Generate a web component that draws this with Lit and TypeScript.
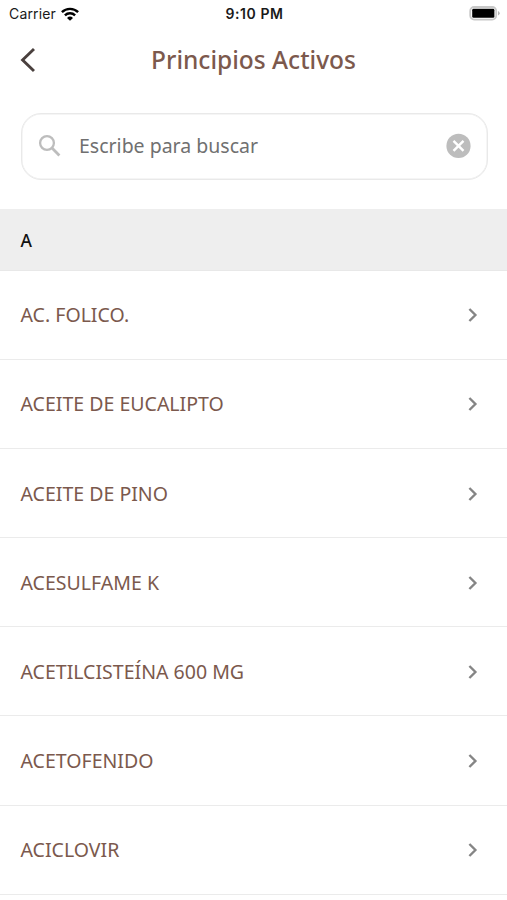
import { LitElement, html, css } from "lit";
import { customElement, property } from "lit/decorators.js";

@customElement("status-bar")
class StatusBar extends LitElement {
  static styles = css`
    :host {
      display: grid;
      grid-template-columns: 1fr auto 1fr;
      align-items: center;
      height: 27px;
      padding: 0 7px 0 9px;
      box-sizing: border-box;
      font-family: Inter, "Liberation Sans", sans-serif;
      font-size: 14px;
      color: #1a1a1a;
    }
    .carrier {
      display: flex;
      align-items: center;
      gap: 5px;
      letter-spacing: 0.15px;
    }
    .time {
      font-weight: 600;
      font-size: 14px;
      letter-spacing: 0.6px;
    }
    .battery {
      justify-self: end;
    }
    svg {
      display: block;
    }
  `;

  render() {
    return html`
      <div class="carrier">
        <span>Carrier</span>
        <svg width="18" height="14" viewBox="0 0 18 14" fill="none" stroke="#000" stroke-width="2.4">
          <path d="M.9 5.2a11.5 11.5 0 0 1 16.2 0" />
          <path d="M3.9 8.4a7.2 7.2 0 0 1 10.2 0" />
          <path d="M9 13.8 6 10.9a4.3 4.3 0 0 1 6 0z" fill="#000" stroke="none" />
        </svg>
      </div>
      <div class="time">9:10 PM</div>
      <svg class="battery" width="31" height="16" viewBox="0 0 31 16">
        <rect x="1.2" y="1" width="26" height="12.6" rx="4" fill="#fff" stroke="#c8c8c8" stroke-width="1.8" />
        <rect x="3.2" y="2.8" width="22.2" height="9" rx="1.4" fill="#000" />
        <path d="M29 5q1.7.8 1.7 2.3T29 9.6z" fill="#b5b5b5" />
      </svg>
    `;
  }
}

@customElement("ingredient-row")
class IngredientRow extends LitElement {
  @property() label = "";

  static styles = css`
    :host {
      display: flex;
      align-items: center;
      justify-content: space-between;
      height: 89.15px;
      box-sizing: border-box;
      padding: 1.2px 29px 0 20.5px;
      border-bottom: 1px solid #ebebeb;
      color: #7b594d;
      font-size: 19.55px;
      line-height: 28px;
    }
    svg {
      display: block;
    }
  `;

  render() {
    return html`
      <span>${this.label}</span>
      <svg width="10" height="16" viewBox="0 0 10 16" fill="none" stroke="#858585" stroke-width="2.4">
        <path d="M1.4 2 7.4 8l-6 6" />
      </svg>
    `;
  }
}

@customElement("app-root")
class AppRoot extends LitElement {
  private items = [
    "AC. FOLICO.",
    "ACEITE DE EUCALIPTO",
    "ACEITE DE PINO",
    "ACESULFAME K",
    "ACETILCISTEÍNA 600 MG",
    "ACETOFENIDO",
    "ACICLOVIR",
  ];

  static styles = css`
    :host {
      display: block;
      height: 900px;
      overflow: hidden;
      background: #fff;
      font-family: "Noto Sans", sans-serif;
    }
    svg {
      display: block;
      flex: none;
    }
    .header {
      display: grid;
      grid-template-columns: 40px 1fr 40px;
      align-items: center;
      height: 65px;
      padding: 0 20px;
    }
    .title {
      margin: 0;
      text-align: center;
      font-size: 24.5px;
      font-weight: 500;
      line-height: 34px;
      color: #7c594d;
    }
    .search {
      display: flex;
      align-items: center;
      box-sizing: border-box;
      height: 66.5px;
      margin: 21px 19.5px 29.5px 20.5px;
      padding: 0 16px 1.5px 16.5px;
      border: 1px solid #e9e9e9;
      border-radius: 20px;
      box-shadow: inset 0 0 0 0.5px #ececec;
    }
    .placeholder {
      flex: 1;
      margin-left: 17px;
      font-size: 19.5px;
      line-height: 28px;
      color: #707070;
    }
    .section {
      display: flex;
      align-items: center;
      box-sizing: border-box;
      height: 61.7px;
      padding: 1px 20.5px 0;
      background: #eee;
      border-bottom: 1px solid #e8e8e8;
      color: #111;
      font-size: 17.5px;
      font-weight: 500;
    }
  `;

  render() {
    return html`
      <status-bar></status-bar>
      <div class="header">
        <svg width="16" height="26" viewBox="0 0 16 26" fill="none" stroke="#4a403e" stroke-width="2.9">
          <path d="M14 2 2.6 13 14 24" />
        </svg>
        <h1 class="title">Principios Activos</h1>
      </div>
      <div class="search">
        <svg width="24" height="24" viewBox="0 0 24 24" fill="none" stroke="#bdbdbd">
          <circle cx="9" cy="9" r="6.9" stroke-width="2.3" />
          <path d="m14 14 7.4 7.4" stroke-width="2.8" />
        </svg>
        <span class="placeholder">Escribe para buscar</span>
        <svg width="25" height="25" viewBox="0 0 25 25">
          <circle cx="12.5" cy="12.9" r="12.1" fill="#bdbdbd" />
          <path d="m7.5 7.9 10 10m0-10-10 10" stroke="#fff" stroke-width="2.4" />
        </svg>
      </div>
      <div class="section">A</div>
      ${this.items.map((item) => html`<ingredient-row .label=${item}></ingredient-row>`)}
    `;
  }
}
